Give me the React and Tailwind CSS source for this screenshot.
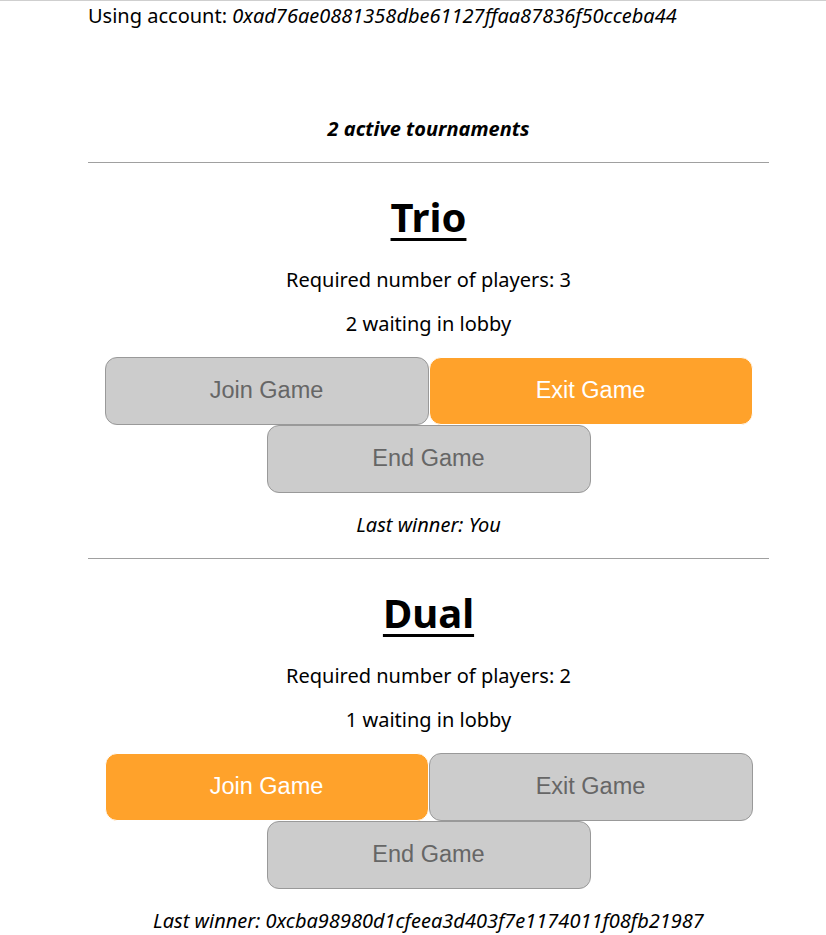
import React from 'react'

const tournaments = [
  {
    name: 'Trio',
    required: 3,
    waiting: 2,
    joined: true,
    winner: 'You'
  },
  {
    name: 'Dual',
    required: 2,
    waiting: 1,
    joined: false,
    winner: '0xcba98980d1cfeea3d403f7e1174011f08fb21987'
  }
]

function GameButton({ label, active }) {
  return (
    <button
      className={`w-[324px] h-[68px] rounded-xl text-[23.5px] font-['Liberation_Sans',Arial,sans-serif] ${
        active
          ? 'bg-[#ffa22b] text-white border border-white'
          : 'bg-[#cccccc] text-[#666666] border border-[#999999]'
      }`}
    >
      {label}
    </button>
  )
}

function Tournament({ t }) {
  return (
    <div className="flex flex-col items-center text-center">
      <hr className="w-full border-0 border-t border-[#a0a0a0]" />
      <h2 className="mt-[30px] text-[40px] leading-[48px] font-bold underline decoration-[3px] underline-offset-[6px]">
        {t.name}
      </h2>
      <p className="mt-[24px] leading-[30px]">Required number of players: {t.required}</p>
      <p className="mt-[14px] leading-[30px]">{t.waiting} waiting in lobby</p>
      <div className="mt-[18px] flex flex-wrap justify-center w-[648px]">
        <GameButton label="Join Game" active={!t.joined} />
        <GameButton label="Exit Game" active={t.joined} />
        <GameButton label="End Game" active={false} />
      </div>
      <p className="mt-[17px] mb-[18px] leading-[30px] italic">Last winner: {t.winner}</p>
    </div>
  )
}

export default function App() {
  const account = '0xad76ae0881358dbe61127ffaa87836f50cceba44'

  return (
    <div className="min-h-[935px] bg-white border-t border-[#cfcfcf] font-['Noto_Sans',sans-serif] text-[20px] text-black">
      <div className="ml-[88px] w-[681px]">
        <p className="leading-[30px]">
          Using account: <span className="italic">{account}</span>
        </p>
        <p className="mt-[83px] mb-[18px] leading-[30px] text-center font-bold italic">
          {tournaments.length} active tournaments
        </p>
        {tournaments.map(t => (
          <Tournament key={t.name} t={t} />
        ))}
      </div>
    </div>
  )
}
